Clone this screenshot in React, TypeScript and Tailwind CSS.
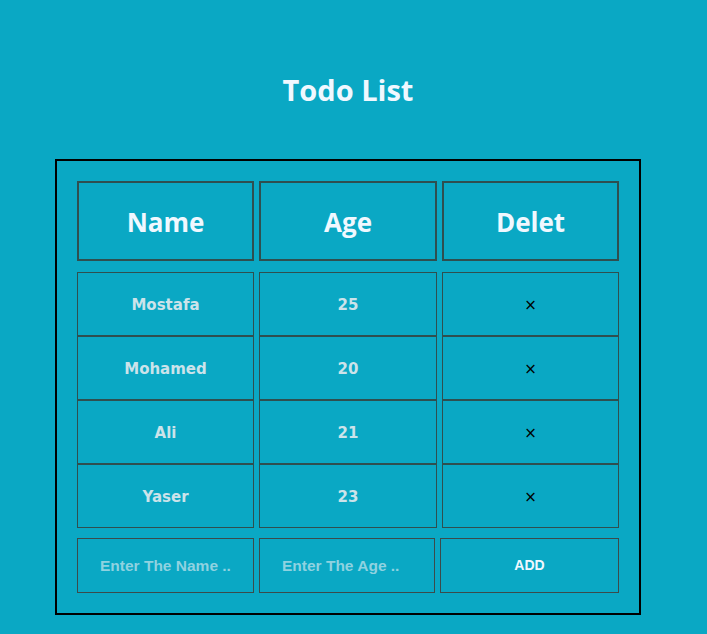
import React from "react";

const rows = [
  { name: "Mostafa", age: "25" },
  { name: "Mohamed", age: "20" },
  { name: "Ali", age: "21" },
  { name: "Yaser", age: "23" },
];

export default function App() {
  return (
    <div className="min-h-[634px] w-full bg-[#0aa8c4]">
      <div className="flex w-[696px] flex-col items-center">
        <h1
          className="pt-[70px] text-[29px] font-bold leading-[40px] text-[#f0f8ff]"
          style={{ fontFamily: '"Open Sans", sans-serif' }}
        >
          Todo List
        </h1>
        <div className="mt-[49px] w-[586px] border-2 border-black p-[20px]">
          <div
            className="grid grid-cols-[177px_178px_177px] gap-x-[5px]"
            style={{ fontFamily: '"Open Sans", sans-serif' }}
          >
            {["Name", "Age", "Delet"].map((h) => (
              <div
                key={h}
                className="flex h-[80px] items-center justify-center border-2 border-[#2f4f4f] pt-[3px] text-[26px] font-bold text-[#f0f8ff]"
              >
                {h}
              </div>
            ))}
          </div>
          <div
            className="mt-[11px] grid grid-cols-[177px_178px_177px] gap-x-[5px]"
            style={{ fontFamily: '"DejaVu Sans", sans-serif' }}
          >
            {rows.map((r) => (
              <React.Fragment key={r.name}>
                <div className="flex h-[64px] items-center justify-center border border-[#2f4f4f] pt-[2px] text-[15px] font-bold text-[#cce3ea]">
                  {r.name}
                </div>
                <div className="flex h-[64px] items-center justify-center border border-[#2f4f4f] pt-[2px] text-[15px] font-bold text-[#cce3ea]">
                  {r.age}
                </div>
                <div className="flex h-[64px] items-center justify-center border border-[#2f4f4f] pt-[3px] text-[15px] text-black">
                  ×
                </div>
              </React.Fragment>
            ))}
          </div>
          <div
            className="mt-[10px] grid grid-cols-[177px_176px_179px] gap-x-[5px]"
            style={{ fontFamily: '"Liberation Sans", Arial, sans-serif' }}
          >
            <input
              className="h-[55px] border border-[#3b4b4b] bg-transparent pl-[22px] text-left text-[15.5px] font-bold text-[#cce3ea] outline-none placeholder:text-[#8fd2e0]"
              placeholder="Enter The Name .."
            />
            <input
              className="h-[55px] border border-[#3b4b4b] bg-transparent pl-[22px] text-left text-[15.5px] font-bold text-[#cce3ea] outline-none placeholder:text-[#8fd2e0]"
              placeholder="Enter The Age .."
            />
            <button className="h-[55px] border border-[#3b4b4b] bg-transparent text-[14px] font-bold text-[#f0f8ff]">
              ADD
            </button>
          </div>
        </div>
      </div>
    </div>
  );
}
